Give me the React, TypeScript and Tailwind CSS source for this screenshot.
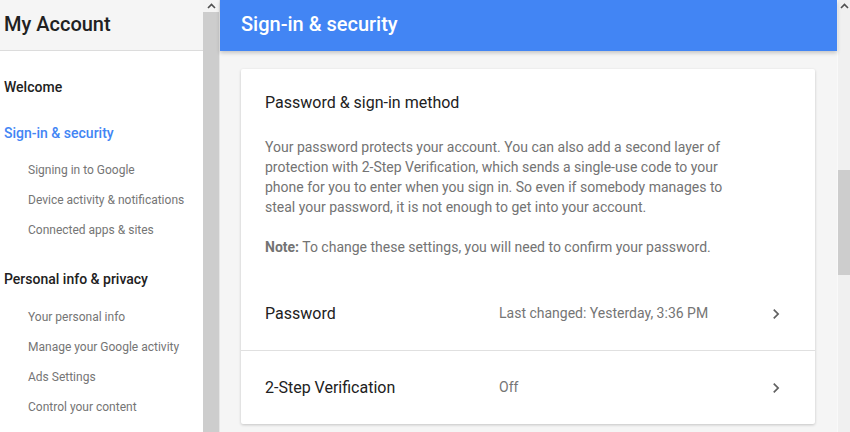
const font = { fontFamily: "Roboto, 'Noto Sans', Arial, sans-serif" };

const personalItems = [
  "Your personal info",
  "Manage your Google activity",
  "Ads Settings",
  "Control your content",
];

const securityItems = [
  "Signing in to Google",
  "Device activity & notifications",
  "Connected apps & sites",
];

function UpArrow() {
  return (
    <svg width="9" height="6" viewBox="0 0 9 6" className="text-[#505050]">
      <path d="M1 5 L4.5 1.5 L8 5" fill="none" stroke="currentColor" strokeWidth="1.6" />
    </svg>
  );
}

function Chevron() {
  return (
    <svg width="20" height="20" viewBox="0 0 24 24" className="shrink-0 text-[#616161]">
      <path d="M10 6L8.59 7.41 13.17 12l-4.58 4.59L10 18l6-6z" fill="currentColor" />
    </svg>
  );
}

function NavHeading({ label, active, tall }: { label: string; active?: boolean; tall?: boolean }) {
  return (
    <div
      className={`flex items-center px-[4px] text-[14px] font-medium ${tall ? "h-[45px]" : "h-[44px]"} ${
        active ? "text-[#4285f4]" : "text-[#212121]"
      }`}
    >
      {label}
    </div>
  );
}

function NavItem({ label }: { label: string }) {
  return <div className="flex h-[30px] items-center pl-[28px] text-[12px] text-[#757575]">{label}</div>;
}

function SettingRow({ label, value }: { label: string; value: string }) {
  return (
    <div className="flex h-[73px] items-center pl-[24px] pr-[29px]">
      <div className="w-[234px] text-[16px] text-[#212121]">{label}</div>
      <div className="flex-1 text-[14px] text-[#757575]">{value}</div>
      <Chevron />
    </div>
  );
}

export default function App() {
  return (
    <div className="flex h-[432px] w-[850px] overflow-hidden bg-white" style={font}>
      {/* sidebar */}
      <aside className="w-[203px] shrink-0 bg-white">
        <div className="flex h-[51px] items-center border-b border-[#dcdcdc] bg-[#f5f5f5] px-[4px] pb-[2px] text-[20px] font-medium text-[#212121]">
          My Account
        </div>
        <nav className="pt-[13px]">
          <div className="flex h-[47px] items-center px-[4px] text-[14px] font-medium text-[#212121]">Welcome</div>
          <NavHeading label="Sign-in & security" active />
          {securityItems.map((item) => (
            <NavItem key={item} label={item} />
          ))}
          <div className="mt-[12px]">
            <NavHeading label="Personal info & privacy" tall />
            {personalItems.map((item) => (
              <NavItem key={item} label={item} />
            ))}
          </div>
        </nav>
      </aside>

      {/* sidebar scrollbar */}
      <div className="flex w-[17px] shrink-0 flex-col border-r border-[#e6e6e6]">
        <div className="flex h-[12px] items-center justify-center bg-[#f4f4f4]">
          <UpArrow />
        </div>
        <div className="flex-1 bg-[#cdcdcd]" />
      </div>

      {/* main */}
      <main className="flex-1 bg-[#f5f5f5]">
        <div className="relative z-10 flex h-[51px] items-center bg-[#4285f4] pb-[3px] pl-[21px] text-[20px] font-medium text-white shadow-[0_2px_4px_rgba(0,0,0,0.2)]">
          Sign-in & security
        </div>
        <div className="ml-[21px] mr-[22px] mt-[18px] rounded-[2px] bg-white shadow-[0_1px_3px_rgba(0,0,0,0.2)]">
          <div className="px-[24px] pb-[20px] pt-[24px]">
            <h2 className="text-[16px] leading-[20px] text-[#212121]">Password &amp; sign-in method</h2>
            <p className="mt-[24px] max-w-[470px] text-[14px] leading-[20px] text-[#737373]">
              Your password protects your account. You can also add a second layer of protection with 2-Step
              Verification, which sends a single-use code to your phone for you to enter when you sign in. So even if
              somebody manages to steal your password, it is not enough to get into your account.
            </p>
            <p className="mt-[20px] text-[14px] leading-[20px] text-[#737373]">
              <span className="font-bold">Note:</span> To change these settings, you will need to confirm your
              password.
            </p>
          </div>
          <SettingRow label="Password" value="Last changed: Yesterday, 3:36 PM" />
          <div className="h-px bg-[#e0e0e0]" />
          <SettingRow label="2-Step Verification" value="Off" />
        </div>
      </main>

      {/* page scrollbar */}
      <div className="flex w-[13px] shrink-0 flex-col border-l border-[#f9f9f9] bg-[#f0f0f0]">
        <div className="flex h-[12px] items-center justify-center">
          <UpArrow />
        </div>
        <div className="mt-[158px] h-[105px] bg-[#cdcdcd]" />
      </div>
    </div>
  );
}
